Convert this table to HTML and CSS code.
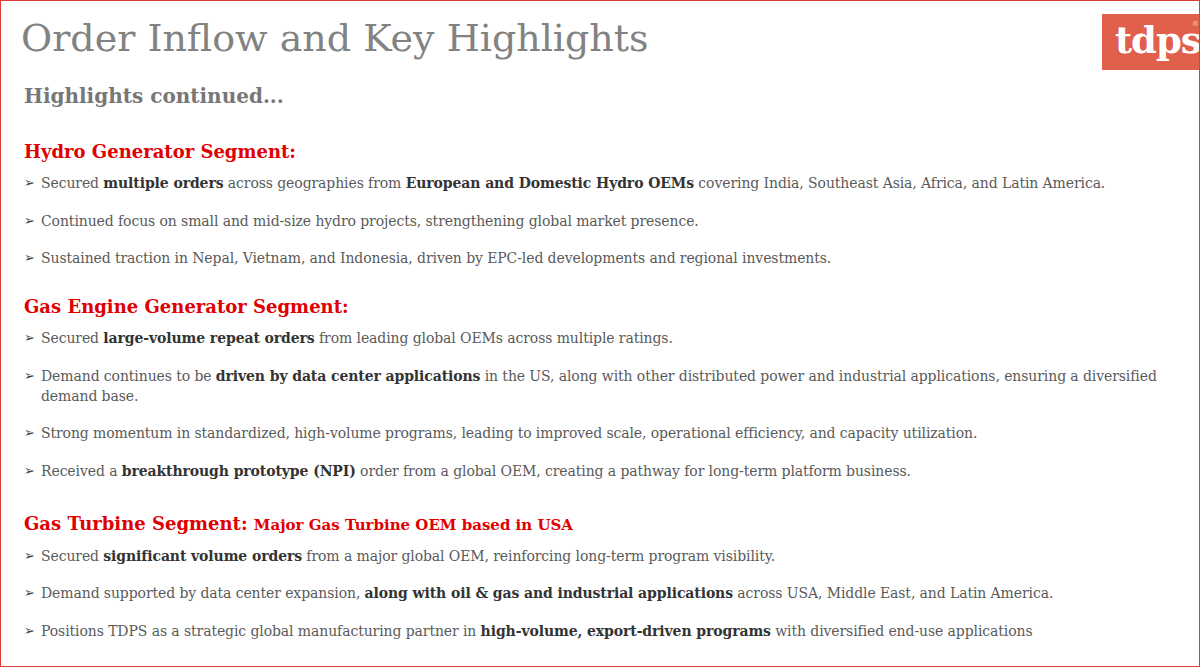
FILE: index.html
```html
<!DOCTYPE html>
<html>
<head>
<meta charset="utf-8">
<link rel="stylesheet" href="styles.css">
</head>
<body>
<div class="slide">
  <header class="head">
    <h1 class="title">Order Inflow and Key Highlights</h1>
    <div class="logo"><span class="logo-text">tdps</span><span class="reg">®</span></div>
  </header>
  <h2 class="sub">Highlights continued...</h2>

  <section class="seg seg-hydro">
    <h3 class="seg-title">Hydro Generator Segment:</h3>
    <ul class="list">
      <li>Secured <b>multiple orders</b> across geographies from <b>European and Domestic Hydro OEMs</b> covering India, Southeast Asia, Africa, and Latin America.</li>
      <li>Continued focus on small and mid-size hydro projects, strengthening global market presence.</li>
      <li>Sustained traction in Nepal, Vietnam, and Indonesia, driven by EPC-led developments and regional investments.</li>
    </ul>
  </section>

  <section class="seg seg-gas">
    <h3 class="seg-title">Gas Engine Generator Segment:</h3>
    <ul class="list">
      <li>Secured <b>large-volume repeat orders</b> from leading global OEMs across multiple ratings.</li>
      <li>Demand continues to be <b>driven by data center applications</b> in the US, along with other distributed power and industrial applications, ensuring a diversified demand base.</li>
      <li>Strong momentum in standardized, high-volume programs, leading to improved scale, operational efficiency, and capacity utilization.</li>
      <li>Received a <b>breakthrough prototype (NPI)</b> order from a global OEM, creating a pathway for long-term platform business.</li>
    </ul>
  </section>

  <section class="seg seg-turbine">
    <h3 class="seg-title">Gas Turbine Segment: <span class="seg-note">Major Gas Turbine OEM based in USA</span></h3>
    <ul class="list">
      <li>Secured <b>significant volume orders</b> from a major global OEM, reinforcing long-term program visibility.</li>
      <li>Demand supported by data center expansion, <b>along with oil &amp; gas and industrial applications</b> across USA, Middle East, and Latin America.</li>
      <li>Positions TDPS as a strategic global manufacturing partner in <b>high-volume, export-driven programs</b> with diversified end-use applications</li>
    </ul>
  </section>
</div>
</body>
</html>
```

FILE: styles.css
```css
html, body {
  margin: 0;
  padding: 0;
  background: #ffffff;
}

.slide {
  width: 1198px;
  height: 665px;
  border: 1px solid #e03c3c;
  overflow: hidden;
  font-family: "DejaVu Serif", serif;
  color: #5a5a5a;
}

.head {
  display: flex;
  justify-content: space-between;
  align-items: flex-start;
}

.title {
  margin: 13px 0 0 20px;
  font-size: 38px;
  font-weight: 400;
  color: #828282;
  line-height: 48px;
  letter-spacing: 0;
}

.logo {
  margin-top: 13px;
  width: 97px;
  height: 56px;
  background: #e0604b;
  color: #fff;
  display: flex;
  align-items: center;
  padding-left: 13px;
  box-sizing: border-box;
  position: relative;
}

.logo-text {
  font-size: 37px;
  font-weight: 700;
  line-height: 1;
  margin-top: -4px;
  letter-spacing: -1px;
}

.reg {
  position: absolute;
  right: 0;
  top: 6px;
  font-size: 7px;
  color: #f3c9bf;
}

.sub {
  margin: 12px 0 0 23px;
  font-size: 20px;
  font-weight: 700;
  color: #777;
  line-height: 28px;
}

.seg-title {
  margin: 0 0 0 23px;
  font-size: 18px;
  font-weight: 700;
  color: #e00000;
  line-height: 26px;
}

.seg-note {
  font-size: 15px;
}

.seg-hydro { margin-top: 29px; }
.seg-gas { margin-top: 26px; }
.seg-turbine { margin-top: 30px; }

.list {
  list-style: none;
  margin: 0;
  padding: 0 0 0 23px;
}

.list li {
  position: relative;
  padding-left: 17px;
  font-size: 14px;
  line-height: 20px;
  margin-top: 17.5px;
  color: #5a5a5a;
  letter-spacing: -0.1px;
}

.list li:first-child { margin-top: 8px; }

.list li::before {
  content: "➢";
  position: absolute;
  left: 0;
  top: 0;
  font-size: 13px;
  color: #3c3c3c;
}

.list b {
  color: #333;
  font-weight: 700;
}
```
